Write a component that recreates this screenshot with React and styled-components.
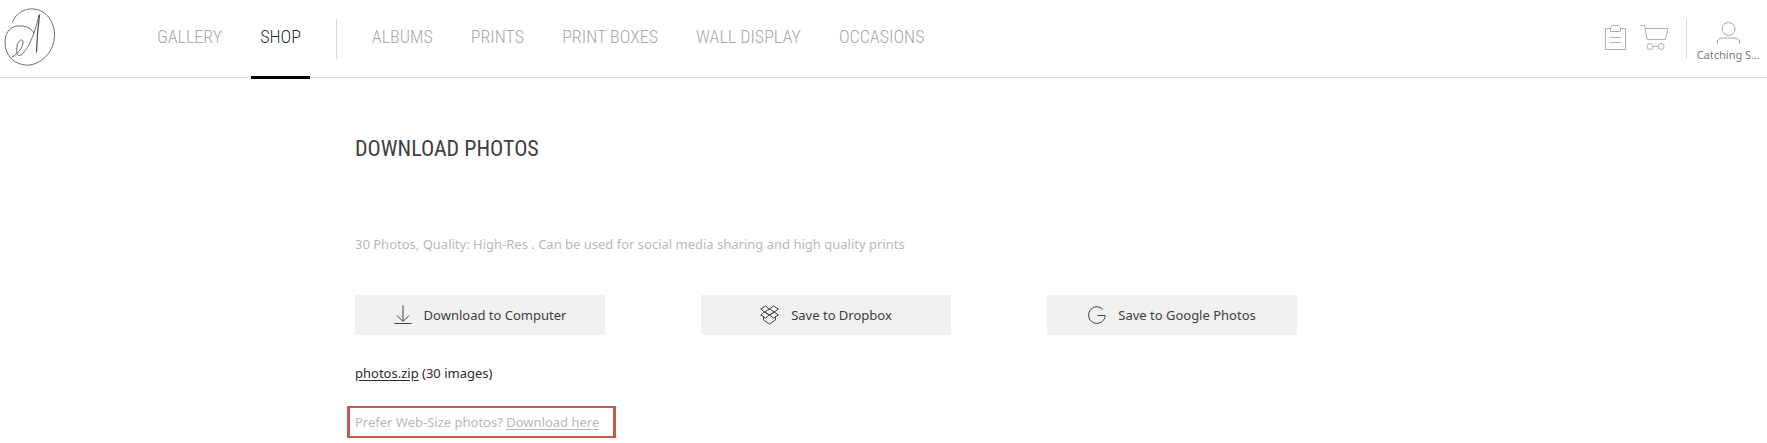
import React from 'react'
import styled, { createGlobalStyle } from 'styled-components'

const GlobalStyle = createGlobalStyle`
    * {
        box-sizing: border-box;
    }
    body {
        margin: 0;
        background: #fff;
        color: #3e403e;
        font-family: "Noto Sans", "Open Sans", sans-serif;
        font-size: 13px;
        line-height: 20px;
    }
`

const narrow = '"Roboto Condensed", "Liberation Sans Narrow", sans-serif'

const Header = styled.header`
    display: flex;
    align-items: center;
    height: 78px;
    border-bottom: 1px solid #dadada;
`
const HomeLink = styled.a`
    display: block;
    width: 148px;
    padding: 0 0 2px 3px;
    line-height: 0;
`
const Nav = styled.nav`
    display: flex;
    align-items: flex-start;
    gap: 20px;
    flex: 1;
    align-self: stretch;
`
const NavLink = styled.a`
    display: flex;
    align-items: center;
    height: 79px;
    padding: 0 9px 2px;
    border-bottom: 3px solid ${({ $active }) => ($active ? '#000' : 'transparent')};
    color: ${({ $active }) => ($active ? '#2e302e' : '#a9a9a7')};
    font-family: ${narrow};
    font-size: 18px;
    font-weight: 300;
    text-decoration: none;
    white-space: nowrap;
`
const Divider = styled.span`
    align-self: center;
    width: 1px;
    height: 40px;
    margin: 0 ${({ $space }) => $space}px;
    background: #d9d9d9;
`
const Tools = styled.div`
    display: flex;
    align-items: center;
    padding-right: 7px;
`
const IconButton = styled.button`
    display: flex;
    padding: 0 7px 2px;
    border: 0;
    background: none;
    cursor: pointer;
`
const Account = styled.button`
    display: flex;
    flex-direction: column;
    align-items: center;
    gap: 4px;
    padding: 6px 0 0;
    border: 0;
    background: none;
    color: #7c7c7c;
    font-family: "Noto Sans", sans-serif;
    font-size: 11px;
    line-height: 14px;
    white-space: nowrap;
    cursor: pointer;
`
const Main = styled.main`
    max-width: 1057px;
    margin: 0 auto;
    padding: 58px 0 0;
`
const Title = styled.h1`
    margin: 0;
    font-family: ${narrow};
    font-size: 22px;
    font-weight: 400;
    line-height: 26px;
`
const Quality = styled.p`
    margin: 72px 0 41px;
    color: #b9b9b7;
`
const Actions = styled.div`
    display: flex;
    flex-wrap: wrap;
    gap: 28px 96px;
`
const ActionButton = styled.button`
    display: flex;
    align-items: center;
    justify-content: center;
    gap: 12px;
    width: 250px;
    height: 40px;
    padding: 0;
    border: 0;
    background: #f1f1f1;
    color: #3e403e;
    font: inherit;
    cursor: pointer;
`
const FileRow = styled.p`
    margin: 28px 0 23px;
    color: #2c2c2c;
`
const TextLink = styled.a`
    color: inherit;
    text-underline-offset: 2px;
`
const WebSize = styled.p`
    width: fit-content;
    margin: 0 0 0 -8px;
    padding: 4px 14px 4px 5px;
    border: solid #c9594b;
    border-width: 2px 3px;
    color: #b9b9b7;
    line-height: 20px;
`

const Logo = () => (
    <svg width="54" height="60" viewBox="0 0 54 60" fill="none" stroke="#4a4a4a" strokeLinecap="round">
        <path strokeWidth=".8" d="M9.500 14C13 5 22 0 31 1C43 2 52 14 51.500 28C51 43 40 55 27 57C13 58 2 49 2 34C2 23 9 17 18 18C24 18 29 21 31 25" />
        <path strokeWidth=".8" d="M9 49C16 45 20 39 20 34C20 30 15 32 14 38C13 44 14 49 18 47C24 43 31 29 36 7" />
        <path strokeWidth="1.200" d="M36.500 7L34.500 26L33.500 44" />
    </svg>
)

const ClipboardIcon = () => (
    <svg width="21" height="27" viewBox="0 0 21 27" fill="none" stroke="#b1b1b1">
        <path d="M5 4.500H.5V25.500H20.500V4.500H16M5.500 7.500V3.500L7.500 1.500H13.500L15.500 3.500V7.500ZM5 13.500H16M5 18.500H16" />
    </svg>
)

const CartIcon = () => (
    <svg width="29" height="27" viewBox="0 0 29 27" fill="none" stroke="#b1b1b1">
        <path d="M.5 1.500H4.500L7 15.500H25.500L28 4.500H5M13 22.500H18" />
        <circle cx="10" cy="22.500" r="3" />
        <circle cx="21" cy="22.500" r="3" />
    </svg>
)

const UserIcon = () => (
    <svg width="23" height="22" viewBox="0 0 23 22" fill="none" stroke="#a5a5a5">
        <circle cx="11.500" cy="7" r="6.500" />
        <path d="M.5 22V20C.5 17.500 3 16 6 16H17C20 16 22.500 17.500 22.500 20V22" />
    </svg>
)

const DownloadIcon = () => (
    <svg width="18" height="20" viewBox="0 0 18 20" fill="none" stroke="#3e403e">
        <path d="M9 .5V16M3 10.500L9 16.500L15 10.500M.5 18.500H17.500" />
    </svg>
)

const DropboxIcon = () => (
    <svg width="19" height="20" viewBox="0 0 19 20" fill="none" stroke="#3e403e" strokeLinejoin="round">
        <path d="M5.500 1L9.500 4L4.500 7L.7 4ZM13.500 1L9.500 4L14.500 7L18.300 4ZM4.500 7L.7 10L5.500 13L9.500 10ZM14.500 7L18.300 10L13.500 13L9.500 10ZM4.500 7L9.500 10L14.500 7M3.500 12V15L9.500 19L15.500 15V12" />
    </svg>
)

const GoogleIcon = () => (
    <svg width="18" height="19" viewBox="0 0 18 19" fill="none" stroke="#3e403e">
        <path d="M15 3.500A8.300 8.300 0 1 0 17.200 9.500H9.500" />
    </svg>
)

const shopLinks = ['ALBUMS', 'PRINTS', 'PRINT BOXES', 'WALL DISPLAY', 'OCCASIONS']

const actions = [
    { label: 'Download to Computer', Icon: DownloadIcon },
    { label: 'Save to Dropbox', Icon: DropboxIcon },
    { label: 'Save to Google Photos', Icon: GoogleIcon },
]

const App = () => (
    <>
        <GlobalStyle />
        <Header>
            <HomeLink href="#" aria-label="Home"><Logo /></HomeLink>
            <Nav>
                <NavLink href="#gallery">GALLERY</NavLink>
                <NavLink href="#shop" $active>SHOP</NavLink>
                <Divider $space={6} />
                {shopLinks.map((label) => (
                    <NavLink key={label} href="#shop">{label}</NavLink>
                ))}
            </Nav>
            <Tools>
                <IconButton aria-label="Orders"><ClipboardIcon /></IconButton>
                <IconButton aria-label="Cart"><CartIcon /></IconButton>
                <Divider $space={10} />
                <Account>
                    <UserIcon />
                    Catching S...
                </Account>
            </Tools>
        </Header>
        <Main>
            <Title>DOWNLOAD PHOTOS</Title>
            <Quality>30 Photos, Quality: High-Res . Can be used for social media sharing and high quality prints</Quality>
            <Actions>
                {actions.map(({ label, Icon }) => (
                    <ActionButton key={label}>
                        <Icon />
                        {label}
                    </ActionButton>
                ))}
            </Actions>
            <FileRow><TextLink href="#photos">photos.zip</TextLink> (30 images)</FileRow>
            <WebSize>Prefer Web-Size photos? <TextLink href="#web-size">Download here</TextLink></WebSize>
        </Main>
    </>
)

export default App
